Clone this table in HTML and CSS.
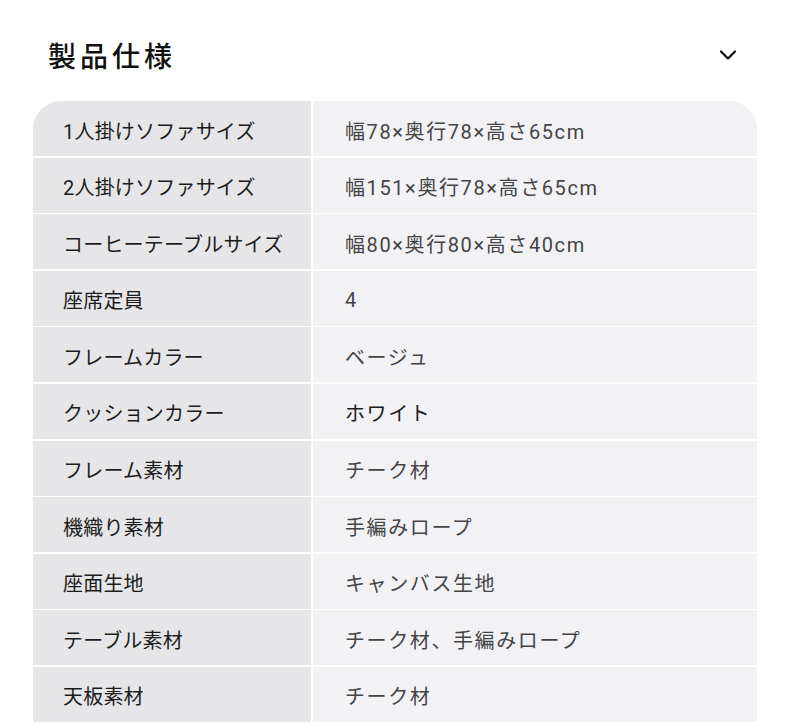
FILE: index.html
```html
<!DOCTYPE html>
<html lang="ja">
<head>
<meta charset="utf-8">
<link rel="stylesheet" href="styles.css">
</head>
<body>
<section class="spec">
  <header class="spec-head">
    <h2 class="spec-title">製品仕様</h2>
    <svg class="chev" width="18" height="12" viewBox="0 0 18 12"><path d="M2 2.5 L9 9.5 L16 2.5" fill="none" stroke="#111" stroke-width="2.2" stroke-linecap="round" stroke-linejoin="round"/></svg>
  </header>
  <div class="table">
    <div class="row"><div class="k">1人掛けソファサイズ</div><div class="v">幅78×奥行78×高さ65cm</div></div>
    <div class="row"><div class="k">2人掛けソファサイズ</div><div class="v">幅151×奥行78×高さ65cm</div></div>
    <div class="row"><div class="k">コーヒーテーブルサイズ</div><div class="v">幅80×奥行80×高さ40cm</div></div>
    <div class="row"><div class="k">座席定員</div><div class="v">4</div></div>
    <div class="row"><div class="k">フレームカラー</div><div class="v">ベージュ</div></div>
    <div class="row"><div class="k">クッションカラー</div><div class="v dark">ホワイト</div></div>
    <div class="row"><div class="k">フレーム素材</div><div class="v">チーク材</div></div>
    <div class="row"><div class="k">機織り素材</div><div class="v">手編みロープ</div></div>
    <div class="row"><div class="k">座面生地</div><div class="v">キャンバス生地</div></div>
    <div class="row"><div class="k">テーブル素材</div><div class="v">チーク材、手編みロープ</div></div>
    <div class="row"><div class="k">天板素材</div><div class="v">チーク材</div></div>
  </div>
</section>
</body>
</html>
```
FILE: styles.css
```css
html, body {
  margin: 0;
  padding: 0;
  background: #ffffff;
  font-family: Roboto, "Noto Sans CJK JP", sans-serif;
}
.spec {
  padding: 33px 33px 0 33px;
}
.spec-head {
  display: flex;
  align-items: center;
  justify-content: space-between;
  padding: 0 20px 0 15px;
  height: 44px;
}
.spec-title {
  margin: 0;
  font-family: "Noto Sans CJK JP", sans-serif;
  font-size: 28px;
  font-weight: 500;
  letter-spacing: 4px;
  color: #111;
}
.chev {
  display: block;
}
.table {
  margin-top: 24px;
  border-radius: 28px 28px 0 0;
  overflow: hidden;
  display: flex;
  flex-direction: column;
  gap: 1.6px;
  background: #ffffff;
}
.row {
  display: grid;
  grid-template-columns: 278px 1fr;
  column-gap: 2px;
  height: 55px;
}
.k, .v {
  display: flex;
  align-items: center;
  font-size: 20px;
  font-weight: 400;
  padding-top: 3px;
  box-sizing: border-box;
}
.k {
  background: #e6e6e8;
  color: #1c1c1c;
  padding-left: 30px;
  letter-spacing: 0.2px;
}
.v {
  background: #f2f2f4;
  color: #444446;
  padding-left: 32px;
  letter-spacing: 1.6px;
}
.v.dark {
  color: #1c1c1c;
}
```
